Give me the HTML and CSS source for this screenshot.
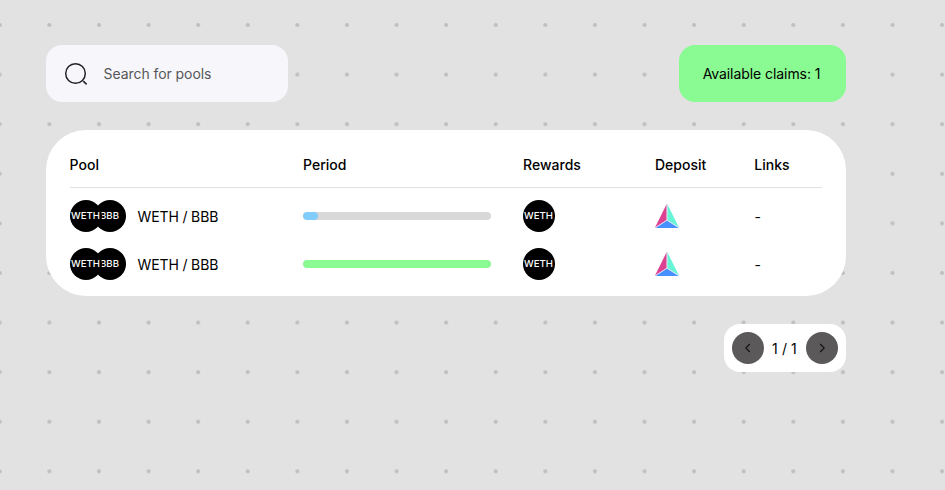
FILE: index.html
```html
<!DOCTYPE html>
<html lang="en">
<head>
<meta charset="utf-8">
<title>Pools</title>
<link rel="stylesheet" href="styles.css">
</head>
<body>
<svg width="0" height="0" class="defs" aria-hidden="true">
  <symbol id="deposit" viewBox="0 0 24 24">
    <path d="M11.7 0V16L0 23.6Z" fill="#dc4291"/>
    <path d="M12.3 0V16L24 23.6Z" fill="#67f5d8"/>
    <path d="M12 16.5L23.8 24H.2Z" fill="#4690ff"/>
    <path d="M12 0V16.2M12 16.2L0 24M12 16.2L24 24" fill="none" stroke="#dfd3ee" stroke-width=".7"/>
  </symbol>
</svg>
<main class="page">
  <header class="toolbar">
    <label class="search">
      <svg class="search-icon" viewBox="0 0 24 24" fill="none" stroke="#232127" stroke-width="1.5"><circle cx="11.5" cy="11.5" r="9.8"/><path d="M19.3 19.1L22.6 22.4"/></svg>
      <input type="text" placeholder="Search for pools">
    </label>
    <button class="claims">Available claims: 1</button>
  </header>
  <section class="table">
    <div class="row head"><span>Pool</span><span>Period</span><span>Rewards</span><span>Deposit</span><span>Links</span></div>
    <div class="row">
      <div class="pool"><div class="pair"><span class="token">BBB</span><span class="token front">WETH</span></div><span>WETH / BBB</span></div>
      <div class="bar"><div class="fill blue" style="width:8%"></div></div>
      <span class="token">WETH</span>
      <svg class="deposit"><use href="#deposit"/></svg>
      <span>-</span>
    </div>
    <div class="row">
      <div class="pool"><div class="pair"><span class="token">BBB</span><span class="token front">WETH</span></div><span>WETH / BBB</span></div>
      <div class="bar"><div class="fill green" style="width:100%"></div></div>
      <span class="token">WETH</span>
      <svg class="deposit"><use href="#deposit"/></svg>
      <span>-</span>
    </div>
  </section>
  <nav class="pager">
    <button aria-label="Previous"><svg viewBox="0 0 12 12"><path d="M7.8 2L3.8 6L7.8 10"/></svg></button>
    <span>1 / 1</span>
    <button aria-label="Next"><svg viewBox="0 0 12 12"><path d="M4.2 2L8.2 6L4.2 10"/></svg></button>
  </nav>
</main>
</body>
</html>
```
FILE: styles.css
```css
* { box-sizing: border-box; }
html, body { height: 100%; }
body {
  margin: 0;
  overflow: hidden;
  font: 14px/20px Inter, sans-serif;
  letter-spacing: -.07px;
  color: #000;
  background: #e2e2e2 radial-gradient(circle at center, #c0c0c0 1.7px, transparent 2.3px) 24.6px .2px / 49.6px 49.6px;
}
.defs { position: absolute; }
.page { width: 800px; margin: 0 0 0 46px; padding-top: 45px; display: flex; flex-direction: column; }
button { border: 0; padding: 0; font: inherit; color: inherit; letter-spacing: inherit; }
.toolbar { display: flex; justify-content: space-between; height: 57px; margin-bottom: 28px; }
.search { display: flex; align-items: center; width: 242px; padding: 0 18px; border-radius: 16px; background: #f6f6fb; }
.search-icon { width: 24px; height: 24px; flex: none; margin-right: 15.6px; }
.search input { width: 140px; min-width: 0; border: 0; padding: 0; outline: 0; background: none; font: inherit; letter-spacing: inherit; }
.search input::placeholder { color: #565658; opacity: 1; }
.claims { width: 167px; padding-right: 2px; border-radius: 16px; background: #8afa92; }
.table { height: 166px; padding: 10px 24px 8px; border-radius: 40px; background: #fff; }
.row { display: grid; grid-template-columns: 233px 220px 132px 99.6px 1fr; align-items: center; height: 48px; }
.row.head { border-bottom: 1px solid #e0e0e0; font-weight: 540; margin-bottom: 4px; letter-spacing: .02px; }
.head span { padding-top: 2px; }
.head span:first-child, .head span:last-child { margin-left: -.4px; }
.pool { display: flex; align-items: center; gap: 11.6px; }
.pool > span { padding-top: 2px; letter-spacing: -.15px; }
.row > span:last-child { padding-top: 2px; }
.pair { display: flex; flex-direction: row-reverse; width: 56px; }
.token { display: flex; align-items: center; justify-content: center; width: 32px; height: 32px; flex: none; padding: 0 1px 1px 0; border-radius: 50%; background: #000; color: #fff; font-size: 9.6px; font-weight: 550; line-height: 12px; letter-spacing: 0; }
.front { position: relative; margin-right: -8px; }
.bar { width: 188px; height: 8px; border-radius: 4px; background: #d8d8d8; overflow: hidden; }
.fill { height: 100%; border-radius: 4px; }
.blue { background: #80cdfb; }
.green { background: #8afa92; }
.deposit { width: 24px; height: 24px; }
.pager { align-self: flex-end; display: flex; align-items: center; justify-content: space-between; width: 122px; height: 48px; margin-top: 28px; padding: 8px; border-radius: 16px; background: #fff; }
.pager span { padding-top: 2px; margin-left: -1px; letter-spacing: .1px; }
.pager button { display: grid; place-items: center; width: 32px; height: 32px; border-radius: 50%; background: #5b5959; }
.pager svg { width: 12px; height: 12px; fill: none; stroke: #111; stroke-width: 1.1; }
```
